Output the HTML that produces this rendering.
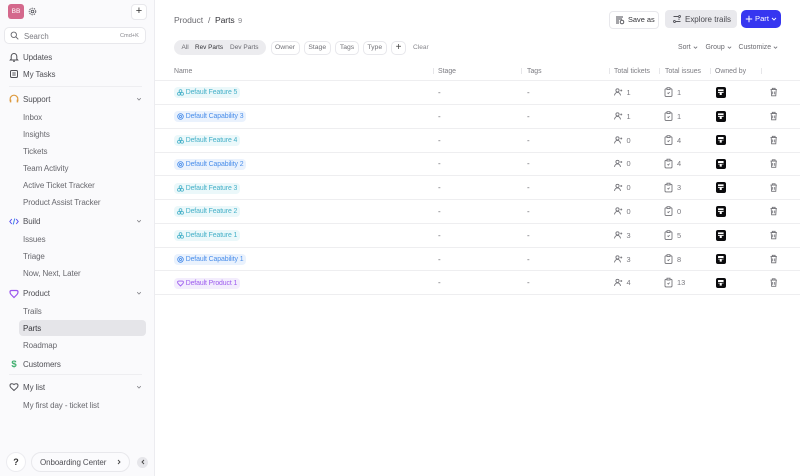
<!DOCTYPE html>
<html><head><meta charset="utf-8">
<style>
*{box-sizing:border-box}
html,body{margin:0;padding:0;width:800px;height:476px;overflow:hidden;background:#fff;font-family:"Liberation Sans",sans-serif;color:#4a4a50}
.a{position:absolute;white-space:nowrap}
.s{position:absolute;left:23px;margin-top:1px;white-space:nowrap;font-size:8px;letter-spacing:-.1px;line-height:12px;color:#68686e}
.h{position:absolute;left:23px;margin-top:1px;white-space:nowrap;font-size:8px;letter-spacing:-.1px;line-height:12px;color:#505056}
.ch{position:absolute;left:136px;width:6px;height:6px}
#side{position:absolute;left:0;top:0;width:155px;height:476px;background:#fafafc;border-right:1px solid #ececf0}
.pill{position:absolute;top:41px;height:14px;border:1px solid #e8e8ec;border-radius:5px;font-size:6.8px;line-height:12px;color:#707076;text-align:center;background:#fff}
.hd{position:absolute;top:66px;font-size:6.9px;line-height:11px;color:#7c7c82;white-space:nowrap}
.sep{position:absolute;top:68px;width:1px;height:6px;background:#e6e6e9}
.ln{position:absolute;left:155px;width:645px;height:1px;background:#eeeef0}
.tag{position:absolute;left:174px;height:11px;margin-top:1px;border-radius:4px;font-size:6.9px;letter-spacing:-.1px;line-height:12px;padding:0 3px 0 11.7px;white-space:nowrap}
.tag svg{position:absolute;left:2.5px;top:2px;width:7px;height:7px}
.f{background:#ebf8fa;color:#45b0c8}
.c{background:#eaf2fd;color:#4a8eea}
.p{background:#f3edfd;color:#9d5cee}
.d{position:absolute;left:438px;font-size:8px;line-height:12px;margin-top:.6px;color:#66666c}
.d2{left:527px}
.n{position:absolute;font-size:7.4px;line-height:12px;margin-top:.6px;color:#77777d}
.own{position:absolute;left:715.5px;width:10.5px;height:10.5px;background:#0b0b0d;border-radius:2px}
.own:after{content:"";position:absolute;left:2.4px;top:2.4px;width:5.7px;height:5.7px;background:#fff;border-radius:.6px;clip-path:polygon(0 0,100% 0,100% 62%,68% 62%,68% 100%,32% 100%,32% 62%,0 62%)}
.own:before{content:"";position:absolute;left:2.4px;top:4.2px;width:5.7px;height:.7px;background:#333;z-index:2}
</style></head><body>

<div id="side"></div>
<div class="a" style="left:8px;top:4px;width:16px;height:15px;border-radius:3px;background:#d4688c;color:#fff;font-size:6.5px;line-height:15px;text-align:center">BB</div>
<svg class="a" style="left:28px;top:7px" width="9" height="9" viewBox="0 0 12 12" fill="none" stroke="#55555c" stroke-width="1.2"><circle cx="6" cy="6" r="1.8"/><circle cx="6" cy="6" r="4.4" stroke-dasharray="2 1.2"/></svg>
<div class="a" style="left:131px;top:4px;width:16px;height:16px;border:1px solid #e8e8ec;border-radius:4px;background:#fff;font-size:11px;line-height:13px;text-align:center;color:#333">+</div>

<div class="a" style="left:4px;top:27px;width:142px;height:17px;border:1px solid #e8e8ec;border-radius:5px;background:#fff"></div>
<svg class="a" style="left:10px;top:31px" width="9" height="9" viewBox="0 0 10 10" fill="none" stroke="#66666c" stroke-width="1"><circle cx="4.2" cy="4.2" r="3"/><path d="M6.5 6.5 9.2 9.2"/></svg>
<div class="a" style="left:24px;top:31px;font-size:7.8px;line-height:12px;color:#7c7c82">Search</div>
<div class="a" style="left:120px;top:31px;font-size:5.6px;line-height:10px;color:#88888e">Cmd+K</div>

<svg class="a" style="left:9px;top:52px" width="10" height="10" viewBox="0 0 10 10" fill="none" stroke="#4f4f55" stroke-width="1"><path d="M2.2 7V4.3a2.8 2.8 0 0 1 5.600 0V7l.9 1H1.300zM4 9.200h2"/></svg>
<div class="h" style="top:51px">Updates</div>
<svg class="a" style="left:9px;top:69px" width="10" height="10" viewBox="0 0 10 10" fill="none" stroke="#4f4f55" stroke-width="1"><rect x="1.500" y="1.500" width="7" height="7" rx="1.200"/><path d="M3.300 4h3.400M3.300 6h3.400"/></svg>
<div class="h" style="top:68px">My Tasks</div>
<div class="a" style="left:9px;top:86px;width:133px;height:1px;background:#eeeef1"></div>

<svg class="a" style="left:9px;top:94px" width="10" height="10" viewBox="0 0 10 10" fill="none" stroke="#dd9a3e" stroke-width="1.200"><path d="M1.200 7V5a3.800 3.800 0 0 1 7.600 0v2"/><rect x=".8" y="5.600" width="1.500" height="2.800" fill="#dd9a3e" stroke="none"/><rect x="7.700" y="5.600" width="1.500" height="2.800" fill="#dd9a3e" stroke="none"/></svg>
<div class="h" style="top:93px">Support</div>
<svg class="ch" style="top:96px" viewBox="0 0 6 6" fill="none" stroke="#85858b"><path d="M1.200 2.200 3 4l1.800-1.800" stroke-width=".8"/></svg>
<div class="s" style="top:111px">Inbox</div>
<div class="s" style="top:128px">Insights</div>
<div class="s" style="top:145px">Tickets</div>
<div class="s" style="top:162px">Team Activity</div>
<div class="s" style="top:179px">Active Ticket Tracker</div>
<div class="s" style="top:196px">Product Assist Tracker</div>

<svg class="a" style="left:9px;top:217px" width="10" height="9" viewBox="0 0 10 9" fill="none" stroke="#5a50f0" stroke-width="1"><path d="M2.800 2 .8 4.500 2.800 7M7.200 2l2 2.500-2 2.500"/><path d="M5.800 1.500 4.200 7.500" stroke="#3f86e8"/></svg>
<div class="h" style="top:215px">Build</div>
<svg class="ch" style="top:218px" viewBox="0 0 6 6" fill="none" stroke="#85858b"><path d="M1.200 2.200 3 4l1.800-1.800" stroke-width=".8"/></svg>
<div class="s" style="top:233px">Issues</div>
<div class="s" style="top:250px">Triage</div>
<div class="s" style="top:267px">Now, Next, Later</div>

<svg class="a" style="left:9px;top:289px" width="10" height="10" viewBox="0 0 10 10" fill="none" stroke="#9a55ee" stroke-width="1.200"><path d="M2.500 1.500h5q1.500 0 1.500 1.500 0 1.500-1 2.500L5 8.500 2 5.500Q1 4.500 1 3q0-1.500 1.500-1.500z"/></svg>
<div class="h" style="top:287px">Product</div>
<svg class="ch" style="top:290px" viewBox="0 0 6 6" fill="none" stroke="#85858b"><path d="M1.200 2.200 3 4l1.800-1.800" stroke-width=".8"/></svg>
<div class="s" style="top:305px">Trails</div>
<div class="a" style="left:19px;top:320px;width:127px;height:16px;background:#e5e5e9;border-radius:4px"></div>
<div class="s" style="top:322px;color:#38383d">Parts</div>
<div class="s" style="top:339px">Roadmap</div>

<div class="a" style="left:9px;top:358px;width:10px;font-size:9.500px;line-height:13px;font-weight:bold;color:#3fae6e;text-align:center">$</div>
<div class="h" style="top:358px">Customers</div>
<div class="a" style="left:9px;top:374px;width:133px;height:1px;background:#eeeef1"></div>

<svg class="a" style="left:9px;top:382px" width="10" height="10" viewBox="0 0 10 10" fill="none" stroke="#4f4f55" stroke-width="1"><path d="M5 8.500 2 5.700Q1 4.700 1 3.500 1 1.700 2.800 1.700 4.200 1.700 5 2.600 5.800 1.700 7.200 1.700 9 1.700 9 3.500 9 4.700 8 5.700z"/></svg>
<div class="h" style="top:381px">My list</div>
<svg class="ch" style="top:384px" viewBox="0 0 6 6" fill="none" stroke="#85858b"><path d="M1.200 2.200 3 4l1.800-1.800" stroke-width=".8"/></svg>
<div class="s" style="top:399px">My first day - ticket list</div>

<div class="a" style="left:6px;top:452px;width:20px;height:20px;border:1px solid #ececf0;border-radius:50%;background:#fff;font-size:9px;font-weight:bold;line-height:18px;text-align:center;color:#333">?</div>
<div class="a" style="left:31px;top:452px;width:99px;height:20px;border:1px solid #e8e8ec;border-radius:10px;background:#fbfbfd"></div>
<div class="a" style="left:40px;top:457px;font-size:8px;letter-spacing:-.1px;line-height:12px;color:#505056">Onboarding Center</div>
<svg class="a" style="left:116px;top:459px" width="6" height="6" viewBox="0 0 6 6" fill="none" stroke="#444" stroke-width=".9"><path d="M2 1l2 2-2 2"/></svg>
<div class="a" style="left:137px;top:456.500px;width:11px;height:11px;border-radius:50%;background:#e6e6ea"></div>
<svg class="a" style="left:139.500px;top:459px" width="6" height="6" viewBox="0 0 6 6" fill="none" stroke="#444" stroke-width=".9"><path d="M4 1 2 3l2 2"/></svg>

<!-- header -->
<div class="a" style="left:174px;top:14px;font-size:8.600px;letter-spacing:-.08px;line-height:13px;color:#6a6a70">Product</div>
<div class="a" style="left:208px;top:14px;font-size:8.600px;line-height:13px;color:#6a6a70">/</div>
<div class="a" style="left:215px;top:14px;font-size:8.600px;letter-spacing:-.1px;line-height:13px;color:#333338">Parts</div>
<div class="a" style="left:238px;top:15px;font-size:7.500px;line-height:12px;color:#88888e">9</div>

<div class="a" style="left:609px;top:11px;width:50px;height:18px;border:1px solid #e8e8ec;border-radius:4px;background:#fff"></div>
<svg class="a" style="left:615px;top:15px" width="10" height="10" viewBox="0 0 10 10" fill="none" stroke="#4a4a50" stroke-width=".9"><path d="M1 2h7M1 4h6M1 6h3M1 8h3"/><circle cx="7" cy="7" r="1.800"/></svg>
<div class="a" style="left:628px;top:14px;font-size:7.400px;line-height:12px;color:#333338">Save as</div>
<div class="a" style="left:665px;top:10px;width:72px;height:18px;border-radius:4px;background:#e9e9ed"></div>
<svg class="a" style="left:672px;top:14px" width="10" height="10" viewBox="0 0 10 10" fill="none" stroke="#55555c" stroke-width=".9"><path d="M1.500 2.500H6M8.500 2.500a1 1 0 1 1-2 0 1 1 0 1 1 2 0M8.500 7.500H4M1.500 7.500a1 1 0 1 1 2 0 1 1 0 1 1-2 0M7 4.500v1.500"/></svg>
<div class="a" style="left:685px;top:14px;font-size:8px;letter-spacing:-.02px;line-height:12px;color:#4a4a50">Explore trails</div>
<div class="a" style="left:741px;top:10px;width:40px;height:18px;border-radius:5px;background:#3636f0"></div>
<svg class="a" style="left:745px;top:15px" width="8" height="8" viewBox="0 0 8 8" fill="none" stroke="#fff" stroke-width="1"><path d="M4 .8v6.400M.8 4h6.400"/></svg>
<div class="a" style="left:755px;top:13px;font-size:7.600px;line-height:12px;color:#fff">Part</div>
<svg class="a" style="left:771px;top:16px" width="6" height="6" viewBox="0 0 6 6" fill="none" stroke="#fff" stroke-width=".9"><path d="M1 2l2 2 2-2"/></svg>

<!-- filters -->
<div class="a" style="left:174px;top:40px;width:92px;height:15px;border-radius:8px;background:#ececef"></div>
<div class="a" style="left:181.500px;top:42px;font-size:6.500px;line-height:11px;color:#6a6a70">All</div>
<div class="a" style="left:195px;top:42px;font-size:6.400px;line-height:11px;color:#333338">Rev Parts</div>
<div class="a" style="left:230px;top:42px;font-size:6.500px;line-height:11px;color:#6a6a70">Dev Parts</div>
<div class="pill" style="left:270.500px;width:29px">Owner</div>
<div class="pill" style="left:303.500px;width:27.500px">Stage</div>
<div class="pill" style="left:335px;width:24px">Tags</div>
<div class="pill" style="left:362.500px;width:24.500px">Type</div>
<div class="pill" style="left:391px;width:15px;font-size:10px;color:#444">+</div>
<div class="a" style="left:413px;top:42px;font-size:6.600px;line-height:11px;color:#88888e">Clear</div>

<div class="a" style="left:678px;top:42px;font-size:6.900px;line-height:11px;color:#6a6a70">Sort</div>
<svg class="a" style="left:692.500px;top:45px" width="5" height="5" viewBox="0 0 6 6" fill="none" stroke="#77777d"><path d="M1 2l2 2 2-2"/></svg>
<div class="a" style="left:705.500px;top:42px;font-size:6.900px;line-height:11px;color:#6a6a70">Group</div>
<svg class="a" style="left:726.500px;top:45px" width="5" height="5" viewBox="0 0 6 6" fill="none" stroke="#77777d"><path d="M1 2l2 2 2-2"/></svg>
<div class="a" style="left:738.500px;top:42px;font-size:6.900px;line-height:11px;color:#6a6a70">Customize</div>
<svg class="a" style="left:772.500px;top:45px" width="5" height="5" viewBox="0 0 6 6" fill="none" stroke="#77777d"><path d="M1 2l2 2 2-2"/></svg>

<!-- table head -->
<div class="hd" style="left:174px">Name</div>
<div class="hd" style="left:438px">Stage</div>
<div class="hd" style="left:527px">Tags</div>
<div class="hd" style="left:614px">Total tickets</div>
<div class="hd" style="left:665px">Total issues</div>
<div class="hd" style="left:715px">Owned by</div>
<div class="sep" style="left:433px"></div><div class="sep" style="left:521px"></div><div class="sep" style="left:609px"></div><div class="sep" style="left:659px"></div><div class="sep" style="left:710px"></div><div class="sep" style="left:761px"></div>
<div class="ln" style="top:79.500px;height:1.500px"></div>
<div class="ln" style="top:104px"></div><div class="ln" style="top:127.750px"></div><div class="ln" style="top:151.500px"></div><div class="ln" style="top:175.250px"></div><div class="ln" style="top:199px"></div><div class="ln" style="top:222.750px"></div><div class="ln" style="top:246.500px"></div><div class="ln" style="top:270.250px"></div><div class="ln" style="top:294px"></div>

<!-- tags -->
<div class="tag f" style="top:86px"><svg viewBox="0 0 8 8" fill="none" stroke="#45b0c8" stroke-width=".9"><circle cx="4" cy="2.300" r="1.600"/><circle cx="2.200" cy="5.500" r="1.600"/><circle cx="5.800" cy="5.500" r="1.600"/></svg>Default Feature 5</div>
<div class="tag c" style="top:110px"><svg viewBox="0 0 8 8" fill="none" stroke="#4a8eea" stroke-width="1"><circle cx="4" cy="4" r="3.200"/><circle cx="4" cy="4" r="1.200"/></svg>Default Capability 3</div>
<div class="tag f" style="top:134px"><svg viewBox="0 0 8 8" fill="none" stroke="#45b0c8" stroke-width=".9"><circle cx="4" cy="2.300" r="1.600"/><circle cx="2.200" cy="5.500" r="1.600"/><circle cx="5.800" cy="5.500" r="1.600"/></svg>Default Feature 4</div>
<div class="tag c" style="top:157.500px"><svg viewBox="0 0 8 8" fill="none" stroke="#4a8eea" stroke-width="1"><circle cx="4" cy="4" r="3.200"/><circle cx="4" cy="4" r="1.200"/></svg>Default Capability 2</div>
<div class="tag f" style="top:181.500px"><svg viewBox="0 0 8 8" fill="none" stroke="#45b0c8" stroke-width=".9"><circle cx="4" cy="2.300" r="1.600"/><circle cx="2.200" cy="5.500" r="1.600"/><circle cx="5.800" cy="5.500" r="1.600"/></svg>Default Feature 3</div>
<div class="tag f" style="top:205px"><svg viewBox="0 0 8 8" fill="none" stroke="#45b0c8" stroke-width=".9"><circle cx="4" cy="2.300" r="1.600"/><circle cx="2.200" cy="5.500" r="1.600"/><circle cx="5.800" cy="5.500" r="1.600"/></svg>Default Feature 2</div>
<div class="tag f" style="top:229px"><svg viewBox="0 0 8 8" fill="none" stroke="#45b0c8" stroke-width=".9"><circle cx="4" cy="2.300" r="1.600"/><circle cx="2.200" cy="5.500" r="1.600"/><circle cx="5.800" cy="5.500" r="1.600"/></svg>Default Feature 1</div>
<div class="tag c" style="top:253px"><svg viewBox="0 0 8 8" fill="none" stroke="#4a8eea" stroke-width="1"><circle cx="4" cy="4" r="3.200"/><circle cx="4" cy="4" r="1.200"/></svg>Default Capability 1</div>
<div class="tag p" style="top:276.500px"><svg viewBox="0 0 8 8" fill="none" stroke="#9d5cee" stroke-width="1"><path d="M2 1.200h4q1.300 0 1.300 1.300 0 1-.8 1.800L4 6.800 1.500 4.300Q.7 3.500.7 2.500.7 1.200 2 1.200z"/></svg>Default Product 1</div>

<!-- dashes -->
<div class="d" style="top:86px">-</div><div class="d d2" style="top:86px">-</div>
<div class="d" style="top:110px">-</div><div class="d d2" style="top:110px">-</div>
<div class="d" style="top:134px">-</div><div class="d d2" style="top:134px">-</div>
<div class="d" style="top:157.500px">-</div><div class="d d2" style="top:157.500px">-</div>
<div class="d" style="top:181.500px">-</div><div class="d d2" style="top:181.500px">-</div>
<div class="d" style="top:205px">-</div><div class="d d2" style="top:205px">-</div>
<div class="d" style="top:229px">-</div><div class="d d2" style="top:229px">-</div>
<div class="d" style="top:253px">-</div><div class="d d2" style="top:253px">-</div>
<div class="d" style="top:276.500px">-</div><div class="d d2" style="top:276.500px">-</div>

<!-- icons via repeated rows -->
<svg class="a" style="left:0;top:0" width="800" height="476" fill="none" stroke="#707076" stroke-width=".85">
<defs>
<g id="u"><circle cx="617.500" cy="-1.600" r="1.600"/><path d="M614.500 3.400q.5-3 3-3 2.500 0 3 3M621.200-2.500v2M620.200-1.500h2"/></g>
<g id="b"><rect x="665" y="-3.200" width="7" height="7.600" rx="1"/><rect x="667" y="-4.300" width="3" height="1.800" fill="#fff"/><path d="M667.500.8l.8.8 1.300-1.500"/></g>
<g id="tr"><path d="M770.500-2.400h6.400M772.300-2.400v-1.300h2.800v1.300M771.200-2.400l.4 6.200h4.200l.4-6.200M772.700-.5v2.800M774.700-.5v2.800"/></g>
</defs>
<use href="#u" y="92"/><use href="#b" y="92"/><use href="#tr" y="92"/>
<use href="#u" y="116"/><use href="#b" y="116"/><use href="#tr" y="116"/>
<use href="#u" y="140"/><use href="#b" y="140"/><use href="#tr" y="140"/>
<use href="#u" y="163.500"/><use href="#b" y="163.500"/><use href="#tr" y="163.500"/>
<use href="#u" y="187.500"/><use href="#b" y="187.500"/><use href="#tr" y="187.500"/>
<use href="#u" y="211"/><use href="#b" y="211"/><use href="#tr" y="211"/>
<use href="#u" y="235"/><use href="#b" y="235"/><use href="#tr" y="235"/>
<use href="#u" y="259"/><use href="#b" y="259"/><use href="#tr" y="259"/>
<use href="#u" y="282.500"/><use href="#b" y="282.500"/><use href="#tr" y="282.500"/>
</svg>

<!-- numbers -->
<div class="n" style="left:626.500px;top:86px">1</div><div class="n" style="left:677px;top:86px">1</div>
<div class="n" style="left:626.500px;top:110px">1</div><div class="n" style="left:677px;top:110px">1</div>
<div class="n" style="left:626.500px;top:134px">0</div><div class="n" style="left:677px;top:134px">4</div>
<div class="n" style="left:626.500px;top:157.500px">0</div><div class="n" style="left:677px;top:157.500px">4</div>
<div class="n" style="left:626.500px;top:181.500px">0</div><div class="n" style="left:677px;top:181.500px">3</div>
<div class="n" style="left:626.500px;top:205px">0</div><div class="n" style="left:677px;top:205px">0</div>
<div class="n" style="left:626.500px;top:229px">3</div><div class="n" style="left:677px;top:229px">5</div>
<div class="n" style="left:626.500px;top:253px">3</div><div class="n" style="left:677px;top:253px">8</div>
<div class="n" style="left:626.500px;top:276.500px">4</div><div class="n" style="left:677px;top:276.500px">13</div>

<!-- owners -->
<div class="own" style="top:87px"></div><div class="own" style="top:111px"></div><div class="own" style="top:134.500px"></div><div class="own" style="top:158.500px"></div><div class="own" style="top:182px"></div><div class="own" style="top:206px"></div><div class="own" style="top:230px"></div><div class="own" style="top:253.500px"></div><div class="own" style="top:277.500px"></div>

</body></html>
